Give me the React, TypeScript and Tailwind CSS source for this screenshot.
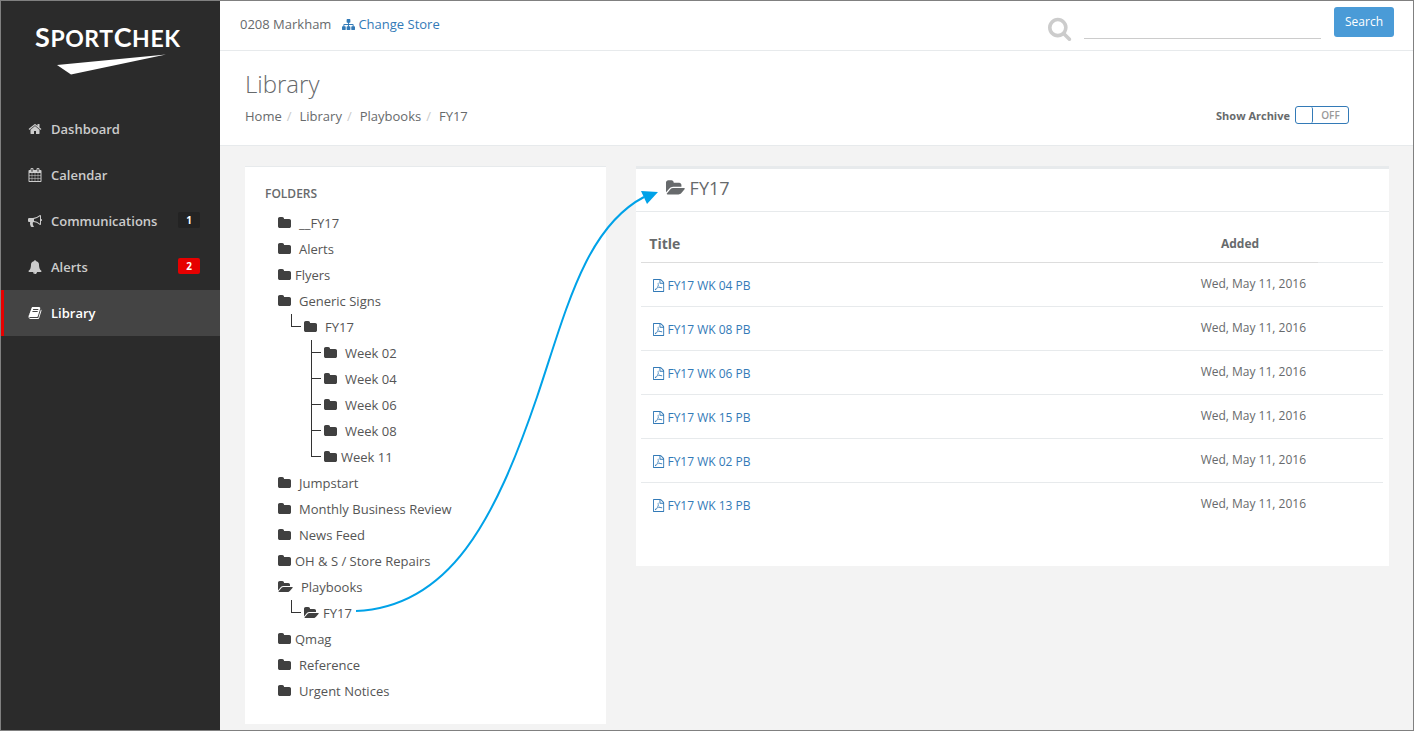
import type { ReactNode } from 'react';

type IconDef = { d: string; x?: number; w: number };

const ICONS: Record<string, IconDef> = {
  home: {
    w: 1792,
    d: 'M1472 992v480q0 26-19 45t-45 19h-384v-384h-256v384h-384q-26 0-45-19t-19-45v-480q0-1 .5-3t.5-3l575-474 575 474q1 2 1 6zm223-69l-62 74q-8 9-21 11h-3q-13 0-21-7l-692-577-692 577q-12 8-24 7-13-2-21-11l-62-74q-8-10-7-23.500t11-21.500l719-599q32-26 76-26t76 26l244 204v-195q0-14 9-23t23-9h192q14 0 23 9t9 23v408l219 182q10 8 11 21.500t-7 23.500z',
  },
  calendar: {
    w: 1792,
    d: 'M192 1664h288v-288h-288v288zm352 0h320v-288h-320v288zm-352-352h288v-320h-288v320zm352 0h320v-320h-320v320zm-352-384h288v-288h-288v288zm736 736h320v-288h-320v288zm-384-736h320v-288h-320v288zm768 736h288v-288h-288v288zm-384-352h320v-320h-320v320zm-352-864v-288q0-13-9.500-22.500t-22.500-9.500h-64q-13 0-22.500 9.500t-9.500 22.500v288q0 13 9.500 22.500t22.500 9.500h64q13 0 22.500-9.500t9.500-22.500zm736 864h288v-320h-288v320zm-384-384h320v-288h-320v288zm384 0h288v-288h-288v288zm32-480v-288q0-13-9.500-22.500t-22.500-9.500h-64q-13 0-22.500 9.500t-9.500 22.500v288q0 13 9.500 22.500t22.500 9.500h64q13 0 22.500-9.500t9.500-22.500zm384-64v1280q0 52-38 90t-90 38h-1408q-52 0-90-38t-38-90v-1280q0-52 38-90t90-38h128v-96q0-66 47-113t113-47h64q66 0 113 47t47 113v96h384v-96q0-66 47-113t113-47h64q66 0 113 47t47 113v96h128q52 0 90 38t38 90z',
  },
  bullhorn: {
    w: 1792,
    d: 'M1664 640q53 0 90.500 37.500t37.500 90.500-37.500 90.500-90.500 37.500v384q0 52-38 90t-90 38q-417-347-812-380-58 19-91 66t-31 100.500 40 92.500q-20 33-23 65.500t6 58 33.500 55 48 50 61.500 50.500q-29 58-111.500 83t-168.500 11.500-132-55.500q-7-23-29.500-87.500t-32-94.500-23-89-15-101 3.500-98.500 22-110.500h-122q-66 0-113-47t-47-113v-192q0-66 47-113t113-47h480q435 0 896-384 52 0 90 38t38 90v384zm-128 604v-954q-394 302-768 343v270q377 42 768 341z',
  },
  bell: {
    w: 1792,
    d: 'M912 1696q0-16-16-16-59 0-101.500-42.500t-42.500-101.500q0-16-16-16t-16 16q0 73 51.500 124.500t124.500 51.500q16 0 16-16zm816-288q0 52-38 90t-90 38h-448q0 106-75 181t-181 75-181-75-75-181h-448q-52 0-90-38t-38-90q50-42 91-88t85-119.500 74.500-158.500 50-206 19.500-260q0-152 117-282.500t307-158.500q-8-19-8-39 0-40 28-68t68-28 68 28 28 68q0 20-8 39 190 28 307 158.500t117 282.500q0 139 19.500 260t50 206 74.500 158.500 85 119.500 91 88z',
  },
  book: {
    w: 1792,
    d: 'M1703 478q40 57 18 129l-275 906q-19 64-76.500 107.500t-122.500 43.500h-923q-77 0-148.500-53.500t-99.500-131.500q-24-67-2-127 0-4 3-27t4-37q1-8-3-21.500t-3-19.500q2-11 8-21t16.500-23.500 16.500-23.500q23-38 45-91.500t30-91.500q3-10 .5-30t-.5-28q3-11 17-28t17-23q21-36 42-92t25-90q1-9-2.500-32t.5-28q4-13 22-30.500t22-22.500q19-26 42.500-84.500t27.500-96.500q1-8-3-25.500t-2-26.500q2-8 9-18t18-23 17-21q8-12 16.500-30.500t15-35 16-36 19.500-32 26.500-23.500 36-11.500 47.500 5.500l-1 3q38-9 51-9h761q74 0 114 56t18 130l-274 906q-36 119-71.500 153.500t-128.500 34.500h-869q-27 0-38 15-11 16-1 43 24 70 144 70h923q29 0 56-15.500t35-41.500l300-987q7-22 5-57 38 15 59 43zm-1064 2q-4 13 2 22.500t20 9.500h608q13 0 25.500-9.500t16.500-22.500l21-64q4-13-2-22.500t-20-9.500h-608q-13 0-25.500 9.500t-16.500 22.500zm-83 256q-4 13 2 22.500t20 9.500h608q13 0 25.500-9.500t16.500-22.500l21-64q4-13-2-22.500t-20-9.500h-608q-13 0-25.500 9.500t-16.500 22.500z',
  },
  sitemap: {
    w: 1792,
    d: 'M1792 1248v320q0 40-28 68t-68 28h-320q-40 0-68-28t-28-68v-320q0-40 28-68t68-28h96v-192h-512v192h96q40 0 68 28t28 68v320q0 40-28 68t-68 28h-320q-40 0-68-28t-28-68v-320q0-40 28-68t68-28h96v-192h-512v192h96q40 0 68 28t28 68v320q0 40-28 68t-68 28h-320q-40 0-68-28t-28-68v-320q0-40 28-68t68-28h96v-192q0-52 38-90t90-38h512v-192h-96q-40 0-68-28t-28-68v-320q0-40 28-68t68-28h320q40 0 68 28t28 68v320q0 40-28 68t-68 28h-96v192h512q52 0 90 38t38 90v192h96q40 0 68 28t28 68z',
  },
  search: {
    x: 64,
    w: 1664,
    d: 'M1216 832q0-185-131.500-316.500t-316.500-131.500-316.500 131.500-131.500 316.500 131.500 316.500 316.500 131.500 316.500-131.500 131.500-316.500zm512 832q0 52-38 90t-90 38q-54 0-90-38l-343-342q-179 124-399 124-143 0-273.500-55.500t-225-150-150-225-55.500-273.500 55.500-273.500 150-225 225-150 273.500-55.500 273.500 55.500 225 150 150 225 55.500 273.500q0 220-124 399l343 343q37 37 37 90z',
  },
  folder: {
    x: 64,
    w: 1664,
    d: 'M1728 608v704q0 92-66 158t-158 66h-1216q-92 0-158-66t-66-158v-960q0-92 66-158t158-66h320q92 0 158 66t66 158v32h672q92 0 158 66t66 158z',
  },
  folderOpen: {
    x: -64,
    w: 1920,
    d: 'M1815 952q0 31-31 66l-336 396q-43 51-120.500 86.500t-143.500 35.500h-1088q-34 0-60.500-13t-26.500-43q0-31 31-66l336-396q43-51 120.500-86.500t143.500-35.500h1088q34 0 60.500 13t26.500 43zm-343-344v160h-832q-94 0-197 47.500t-164 119.500l-337 396-5 6q0-4-.5-12.500t-.5-12.500v-960q0-92 66-158t158-66h320q92 0 158 66t66 158v32h544q92 0 158 66t66 158z',
  },
  pdf: {
    x: 128,
    w: 1536,
    d: 'M1596 380q28 28 48 76t20 88v1152q0 40-28 68t-68 28h-1344q-40 0-68-28t-28-68v-1600q0-40 28-68t68-28h896q40 0 88 20t76 48zm-444-244v376h376q-10-29-22-41l-313-313q-12-12-41-22zm384 1528v-1024h-416q-40 0-68-28t-28-68v-416h-768v1536h1280zm-514-593q33 26 84 56 59-7 117-7 147 0 177 49 16 22 2 52 0 1-1 2l-2 2v1q-6 38-71 38-48 0-115-20t-130-53q-221 24-392 83-153 262-242 262-15 0-28-7l-24-12q-1-1-6-5-10-10-6-36 9-40 56-91.500t132-96.500q14-9 23 6 2 2 2 4 52-85 107-197 68-136 104-262-24-82-30.500-159.500t6.500-127.500q11-40 42-40h22q23 0 35 15 18 21 9 68-2 6-4 8 1 3 1 8v30q-2 123-14 192 55 164 146 238zm-576 411q52-24 137-158-51 40-87.500 84t-49.500 74zm398-920q-15 42-2 132 1-7 7-44 0-3 7-43 1-4 4-8-1-1-1-2t-1-2q-1-22-13-36 0 1-1 2v2zm-124 661q135-54 284-81-2-1-13-9.500t-16-13.500q-76-67-127-176-27 86-83 197-30 56-45 83zm646-16q-24-24-140-24 76 28 124 28 14 0 18-1 0-1-2-3z',
  },
};

function Icon({ name, className }: { name: string; className: string }) {
  const { d, x = 0, w } = ICONS[name];
  return (
    <svg aria-hidden="true" viewBox={`${x} 0 ${w} 1792`} className={`w-auto shrink-0 overflow-visible fill-current ${className}`}>
      <path d={d} />
    </svg>
  );
}

type NavEntry = { label: string; icon: string; badge?: string; badgeClass?: string; active?: boolean };

const NAV: NavEntry[] = [
  { label: 'Dashboard', icon: 'home' },
  { label: 'Calendar', icon: 'calendar' },
  { label: 'Communications', icon: 'bullhorn', badge: '1', badgeClass: 'bg-[#232323]' },
  { label: 'Alerts', icon: 'bell', badge: '2', badgeClass: 'bg-[#e60000]' },
  { label: 'Library', icon: 'book', active: true },
];

type Folder = { name: string; open?: boolean; tight?: boolean; children?: Folder[] };

const FOLDERS: Folder[] = [
  { name: '__FY17' },
  { name: 'Alerts' },
  { name: 'Flyers', tight: true },
  {
    name: 'Generic Signs',
    children: [
      {
        name: 'FY17',
        children: [
          { name: 'Week 02' },
          { name: 'Week 04' },
          { name: 'Week 06' },
          { name: 'Week 08' },
          { name: 'Week 11', tight: true },
        ],
      },
    ],
  },
  { name: 'Jumpstart' },
  { name: 'Monthly Business Review' },
  { name: 'News Feed' },
  { name: 'OH & S / Store Repairs', tight: true },
  { name: 'Playbooks', open: true, children: [{ name: 'FY17', open: true, tight: true }] },
  { name: 'Qmag', tight: true },
  { name: 'Reference' },
  { name: 'Urgent Notices' },
];

const FILES = ['FY17 WK 04 PB', 'FY17 WK 08 PB', 'FY17 WK 06 PB', 'FY17 WK 15 PB', 'FY17 WK 02 PB', 'FY17 WK 13 PB'];

function FolderItem({ folder, depth, last }: { folder: Folder; depth: number; last: boolean }) {
  return (
    <li>
      <div className="flex h-[26px]">
        {depth > 0 && (
          <span aria-hidden="true" className={`mr-[3px] w-[10px] border-l border-[#333] ${last ? 'h-[13px]' : 'h-[26px]'}`}>
            <span className="block h-[13px] border-b border-[#333]" />
          </span>
        )}
        <a href="#" className={`flex items-center ${folder.tight ? 'gap-1' : 'gap-2'}`}>
          <Icon name={folder.open ? 'folderOpen' : 'folder'} className="h-[14px] text-[#404040]" />
          {folder.name}
        </a>
      </div>
      {folder.children && (
        <ul className={depth === 0 ? 'pl-[13px]' : 'pl-[20px]'}>
          {folder.children.map((child, i) => (
            <FolderItem key={child.name} folder={child} depth={depth + 1} last={i === folder.children!.length - 1} />
          ))}
        </ul>
      )}
    </li>
  );
}

function Crumb({ children, first }: { children: ReactNode; first?: boolean }) {
  return (
    <li className="flex">
      {!first && <span className="px-[5px] text-[#ccc]">/</span>}
      <a href="#" className={first ? '' : 'pl-[3px]'}>
        {children}
      </a>
    </li>
  );
}

function Sidebar() {
  return (
    <aside className="w-[219px] shrink-0 bg-[#2b2b2b]">
      <div className="flex h-[105px] flex-col pt-5 pl-[34px] text-white">
        <div className="h-8 font-['Lato'] text-[23px] leading-[32px] font-bold tracking-wide">
          <span className="text-[27px]">S</span>PORT<span className="text-[27px]">C</span>HEK
        </div>
        <svg aria-hidden="true" viewBox="0 0 110 22" className="ml-[21px] h-[22px] w-[110px] fill-white">
          <path d="M1 12 110 1.500 15 21.500Z" />
        </svg>
      </div>
      <nav>
        {NAV.map((item) => (
          <a
            key={item.label}
            href="#"
            className={`flex h-[46px] items-center border-l-[3px] pr-5 pl-6 font-semibold ${
              item.active ? 'border-[#e60000] bg-[#444] text-white' : 'border-transparent text-[#ccc]'
            }`}
          >
            <Icon name={item.icon} className="mr-[9px] h-[14px]" />
            <span className="grow">{item.label}</span>
            {item.badge && (
              <span className={`mb-[2px] h-4 w-[22px] rounded-[2px] text-center text-[10px] leading-4 font-bold text-white ${item.badgeClass}`}>
                {item.badge}
              </span>
            )}
          </a>
        ))}
      </nav>
    </aside>
  );
}

export default function App() {
  return (
    <div className="relative flex min-h-screen border border-[#808080] bg-[#f3f3f3] font-['Open_Sans',sans-serif] text-[13px] leading-[18px] text-[#676a6c]">
      <Sidebar />
      <main className="min-w-0 grow">
        <header className="flex h-[50px] items-start justify-between border-b border-[#e7eaec] bg-white pr-[19px] pl-5">
          <div className="flex items-center pt-[14px]">
            <span className="mr-[11px]">0208 Markham</span>
            <a href="#" className="flex items-center gap-[3px] text-[#337ab7]">
              <Icon name="sitemap" className="h-[13px]" />
              Change Store
            </a>
          </div>
          <form className="flex items-start pt-[6px]" onSubmit={(e) => e.preventDefault()}>
            <label htmlFor="q" className="mt-[9px] mr-[13px] text-[#ccc]">
              <Icon name="search" className="h-[25px]" />
            </label>
            <input
              id="q"
              type="text"
              aria-label="Search"
              className="mr-[13px] h-8 w-[237px] border-b border-[#ccc] bg-transparent outline-none"
            />
            <button type="submit" className="h-[30px] w-[60px] rounded-[3px] bg-[#4a9bd7] text-[12px] text-white">
              Search
            </button>
          </form>
        </header>

        <section className="flex h-[95px] justify-between border-b border-[#e7eaec] bg-white pr-16 pl-[25px]">
          <div>
            <h1 className="pt-4 text-[24px] leading-[34px] font-light">Library</h1>
            <ol className="mt-[6px] flex">
              <Crumb first>Home</Crumb>
              <Crumb>Library</Crumb>
              <Crumb>Playbooks</Crumb>
              <Crumb>FY17</Crumb>
            </ol>
          </div>
          <label className="mt-[55px] flex h-[18px] items-center gap-[5px] text-[11px] font-bold">
            <span className="pt-[2px]">Show Archive</span>
            <input type="checkbox" className="peer sr-only" />
            <span className="flex h-[18px] w-[54px] rounded-[3px] border border-[#337ab7] text-[10px] leading-4 font-semibold text-[#999]">
              <span className="w-[17px] rounded-[2px] border-r border-[#337ab7]" />
              <span className="grow text-center">OFF</span>
            </span>
          </label>
        </section>

        <div className="grid grid-cols-3 items-start gap-[30px] pt-5 pr-6 pb-[5px] pl-[25px]">
          <section className="border-t border-[#e7eaec] bg-white px-5 pt-[18px] pb-5">
            <h2 className="text-[12px] font-semibold">FOLDERS</h2>
            <ul className="pt-[7px] pl-[13px] text-[#555]">
              {FOLDERS.map((f) => (
                <FolderItem key={f.name} folder={f} depth={0} last={false} />
              ))}
            </ul>
          </section>

          <section className="col-span-2 border-t-[3px] border-[#e7eaec] bg-white pb-10">
            <h2 className="flex h-[43px] items-center gap-1 border-b border-[#e7eaec] pb-1 pl-[30px] text-[18px]">
              <Icon name="folderOpen" className="h-[18px]" />
              FY17
            </h2>
            <div className="pt-[15px] pr-[6px] pl-[5px]">
              <table className="w-full table-fixed border-collapse">
                <thead>
                  <tr className="h-[35px] border-b border-[#e7eaec]">
                    <th className="border-b border-[#ddd] pl-2 text-left text-[14px] font-bold">Title</th>
                    <th className="w-[156px] border-b border-[#ddd] pb-px text-center text-[12px] font-bold">Added</th>
                    <th className="w-[65px]" aria-label="Actions" />
                  </tr>
                </thead>
                <tbody>
                  {FILES.map((file) => (
                    <tr key={file} className="h-11 border-b border-[#e7eaec] text-[12px] last:border-b-0">
                      <td className="pt-[3px] pl-3">
                        <a href="#" className="flex items-center gap-[3px] text-[#337ab7]">
                          <Icon name="pdf" className="h-[13px]" />
                          {file}
                        </a>
                      </td>
                      <td className="pr-3 text-right">Wed, May 11, 2016</td>
                      <td />
                    </tr>
                  ))}
                </tbody>
              </table>
            </div>
          </section>
        </div>
      </main>

      <svg aria-hidden="true" viewBox="0 0 310 430" className="pointer-events-none absolute top-[185px] left-[351px] h-[430px] w-[310px]">
        <path d="M4 425C98 421 143 334 185 211C214 125 233 42 292 11" fill="none" stroke="#00a2e8" strokeWidth="2" />
        <path d="M306 6 289 5l6 13Z" fill="#00a2e8" />
      </svg>
    </div>
  );
}
